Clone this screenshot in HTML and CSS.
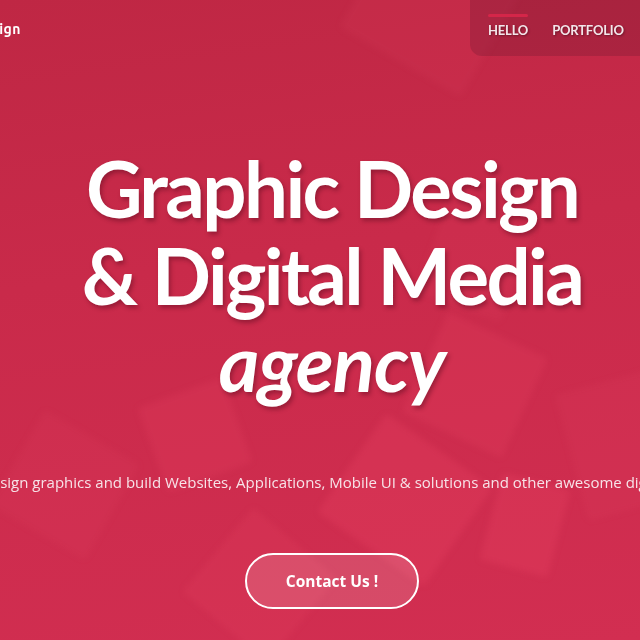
FILE: index.html
```html
<!DOCTYPE html>
<html lang="en">
<head>
<meta charset="utf-8">
<title>Graphic Design &amp; Digital Media agency</title>
<link rel="stylesheet" href="styles.css">
</head>
<body>
<section class="hero">
  <div class="shapes" aria-hidden="true">
    <span class="shape s1"></span>
    <span class="shape s2"></span>
    <span class="shape s3"></span>
    <span class="shape s4"></span>
    <span class="shape s5"></span>
    <span class="shape s6"></span>
    <span class="shape s7"></span>
    <span class="shape s8"></span>
    <span class="shape s9"></span>
  </div>
  <header class="topbar">
    <div class="logo-wrap"><a class="logo" href="#">Emerald Design</a></div>
    <nav class="nav">
      <a class="nav-link active" href="#">HELLO</a>
      <a class="nav-link" href="#">PORTFOLIO</a>
    </nav>
  </header>
  <div class="content">
    <h1 class="title">Graphic Design<br>&amp; Digital Media<br><em>agency</em></h1>
    <div class="lead-row">
      <p class="lead">We design graphics and build Websites, Applications, Mobile UI &amp; solutions and other awesome digital stuff.</p>
    </div>
    <a class="btn" href="#">Contact Us !</a>
  </div>
</section>
</body>
</html>
```
FILE: styles.css
```css
* { box-sizing: border-box; }
html, body { margin: 0; padding: 0; }
body {
  width: 640px;
  height: 640px;
  overflow: hidden;
  font-family: "Open Sans", "Liberation Sans", sans-serif;
  color: #fff;
}
.hero {
  position: relative;
  height: 640px;
  overflow: hidden;
  background: linear-gradient(172deg, #bf2744 0%, #c92a4a 40%, #d22e51 100%);
}
.shapes { position: absolute; inset: 0; pointer-events: none; filter: blur(3px); }
.shape {
  position: absolute;
  background: rgba(240, 75, 105, 0.22);
  border-radius: 4px;
}
.s1 { left: 420px; top: 330px; width: 110px; height: 110px; transform: rotate(25deg); background: rgba(240, 75, 105, 0.16); }
.s2 { left: 150px; top: 390px; width: 90px; height: 90px; transform: rotate(-20deg); background: rgba(240, 75, 105, 0.16); }
.s3 { left: 340px; top: 440px; width: 130px; height: 120px; transform: rotate(35deg); }
.s4 { left: 490px; top: 480px; width: 70px; height: 90px; transform: rotate(15deg); }
.s5 { left: 205px; top: 530px; width: 110px; height: 110px; transform: rotate(40deg); background: rgba(240, 75, 105, 0.14); }
.s6 { left: 10px; top: 430px; width: 110px; height: 110px; transform: rotate(30deg); background: rgba(240, 75, 105, 0.10); }
.s7 { left: 360px; top: -50px; width: 140px; height: 120px; transform: rotate(30deg); background: rgba(240, 75, 105, 0.10); }
.s8 { left: 570px; top: 380px; width: 100px; height: 130px; transform: rotate(-15deg); background: rgba(240, 75, 105, 0.10); }
.s9 { left: 430px; top: 210px; width: 90px; height: 100px; transform: rotate(20deg); background: rgba(240, 75, 105, 0.10); }

.topbar {
  position: relative;
  display: flex;
  justify-content: space-between;
  align-items: flex-start;
  height: 57px;
}
.logo-wrap {
  width: 21px;
  height: 57px;
  display: flex;
  justify-content: flex-end;
  align-items: center;
}
.logo {
  white-space: nowrap;
  font-family: "Ubuntu", "DejaVu Sans", sans-serif;
  font-weight: 700;
  font-size: 14px;
  color: #fff;
  text-decoration: none;
  letter-spacing: 0.5px;
}
.nav {
  display: flex;
  gap: 24px;
  height: 56px;
  align-items: center;
  padding: 3px 0 0 18px;
  width: 170px;
  background: rgba(80, 20, 40, 0.22);
  border-bottom-left-radius: 12px;
}
.nav-link {
  position: relative;
  font-family: "Lato", "Open Sans", sans-serif;
  font-weight: 700;
  font-size: 13px;
  letter-spacing: -0.2px;
  color: #f3e6ea;
  text-decoration: none;
  text-shadow: 1px 1px 2px rgba(0, 0, 0, 0.35);
}
.nav-link.active::before {
  content: "";
  position: absolute;
  left: 0;
  right: 0;
  top: -8px;
  height: 3px;
  border-radius: 2px;
  background: #d42649;
}

.content {
  position: relative;
  display: flex;
  flex-direction: column;
  align-items: center;
  padding-left: 24px;
}
.title {
  margin: 88px 0 0;
  font-family: "Lato", "Open Sans", sans-serif;
  font-weight: 700;
  font-size: 78px;
  line-height: 87px;
  text-align: center;
  letter-spacing: -2.6px;
  text-shadow: 2px 3px 4px rgba(90, 10, 30, 0.45);
}
.title em { font-style: italic; letter-spacing: -1px; }
.lead-row {
  align-self: stretch;
  display: flex;
  justify-content: center;
  margin-top: 66px;
}
.lead {
  margin: 0;
  white-space: nowrap;
  font-size: 15px;
  font-weight: 400;
  color: #f7e3e8;
  flex-shrink: 0;
}
.btn {
  margin-top: 61px;
  width: 174px;
  height: 56px;
  border: 2px solid #fff;
  border-radius: 28px;
  background: rgba(255, 255, 255, 0.14);
  display: flex;
  align-items: center;
  justify-content: center;
  font-weight: 700;
  font-size: 15.5px;
  color: #fff;
  text-decoration: none;
}
```
